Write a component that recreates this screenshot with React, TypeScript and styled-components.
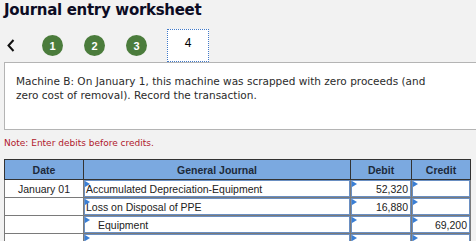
import styled, { createGlobalStyle } from 'styled-components'

const GlobalStyle = createGlobalStyle`
  html, body {
    margin: 0;
    padding: 0;
    background: #f2f2f2;
    overflow: hidden;
  }
  body {
    font-family: 'DejaVu Sans', Verdana, sans-serif;
  }
`

export const Page = styled.div`
  width: 476px;
  height: 241px;
  overflow: hidden;
  padding-left: 4px;
  box-sizing: border-box;
`

export const Title = styled.h1`
  margin: 0;
  height: 29px;
  padding-top: 1px;
  box-sizing: border-box;
  font-family: 'DejaVu Sans', Verdana, sans-serif;
  font-size: 15px;
  font-weight: bold;
  letter-spacing: -0.3px;
  color: #0c0c24;
`

export const Steps = styled.div`
  display: flex;
  align-items: center;
  height: 33px;
  position: relative;
  z-index: 1;
`

export const Back = styled.div`
  display: flex;
  align-items: center;
  margin-left: 3px;
  margin-right: 27px;
  width: 8px;
  height: 14px;
`

export const StepDot = styled.div`
  width: 21px;
  height: 21px;
  border-radius: 50%;
  background: #4b7c3c;
  color: #fff;
  font-family: 'Liberation Sans', Arial, sans-serif;
  font-size: 11px;
  font-weight: bold;
  display: flex;
  align-items: center;
  justify-content: center;
  margin-right: 21px;
`

export const StepTab = styled.div`
  width: 42px;
  height: 33px;
  box-sizing: border-box;
  margin-left: -1px;
  border: 1px dotted #3f78c8;
  background: #fff;
  font-family: 'Liberation Sans', Arial, sans-serif;
  font-size: 12px;
  color: #000;
  display: flex;
  justify-content: center;
  padding-top: 6px;
`

export const Panel = styled.div`
  width: 480px;
  height: 68px;
  box-sizing: border-box;
  border: 1px solid #b4b4b4;
  background: #fff;
  padding: 11px 0 0 11px;
  font-family: 'DejaVu Sans', Verdana, sans-serif;
  font-size: 10.5px;
  line-height: 14px;
  color: #2b2b2b;
`

export const Note = styled.div`
  margin-top: 8px;
  height: 21px;
  font-family: 'DejaVu Sans', Verdana, sans-serif;
  font-size: 9px;
  color: #b0182c;
`

export const Table = styled.table`
  border-collapse: collapse;
  table-layout: fixed;
  width: 466px;
  font-family: 'Liberation Sans', Arial, sans-serif;
  font-size: 10.5px;
  color: #222;
`

export const Th = styled.th`
  height: 19px;
  padding: 0;
  background: #7ba9e0;
  border: 1px solid #333;
  font-family: 'Liberation Sans', Arial, sans-serif;
  font-size: 10.5px;
  font-weight: bold;
  color: #1d2a3a;
`

export const DateCell = styled.td`
  height: 17px;
  padding: 0;
  border: 1px solid #7a7a7a;
  background: #fff;
  text-align: center;
`

export const EntryCell = styled.td`
  height: 17px;
  padding: 0;
  border: 1px solid #7a7a7a;
  background: #fff;
`

export const EntryBox = styled.div<{ align?: 'left' | 'right'; indent?: boolean }>`
  position: relative;
  height: 17px;
  box-sizing: border-box;
  border: 1px solid #6a8fc2;
  line-height: 16px;
  white-space: nowrap;
  overflow: hidden;
  text-align: ${(p) => (p.align === 'right' ? 'right' : 'left')};
  padding: ${(p) => (p.indent ? '0 2px 0 13px' : '0 2px 0 1px')};
`

export const Flag = styled.span`
  position: absolute;
  left: 0;
  top: 0;
  width: 0;
  height: 0;
  border-top: 3px solid transparent;
  border-bottom: 3px solid transparent;
  border-left: 5px solid #3a7fd5;
`

type Row = {
  date: string
  account: string
  debit: string
  credit: string
  indent?: boolean
}

const rows: Row[] = [
  { date: 'January 01', account: 'Accumulated Depreciation-Equipment', debit: '52,320', credit: '' },
  { date: '', account: 'Loss on Disposal of PPE', debit: '16,880', credit: '' },
  { date: '', account: 'Equipment', debit: '', credit: '69,200', indent: true },
  { date: '', account: '', debit: '', credit: '' },
]

const Entry = ({ text, align, indent }: { text: string; align?: 'left' | 'right'; indent?: boolean }) => (
  <EntryCell>
    <EntryBox align={align} indent={indent}>
      <Flag />
      {text}
    </EntryBox>
  </EntryCell>
)

export default function App() {
  return (
    <>
      <GlobalStyle />
      <Page>
        <Title>Journal entry worksheet</Title>
        <Steps>
          <Back>
            <svg width="8" height="13" viewBox="0 0 8 13">
              <polyline points="6.5,1 1.5,6.5 6.5,12" fill="none" stroke="#111" strokeWidth="2" />
            </svg>
          </Back>
          <StepDot>1</StepDot>
          <StepDot>2</StepDot>
          <StepDot>3</StepDot>
          <StepTab>4</StepTab>
        </Steps>
        <Panel>
          Machine B: On January 1, this machine was scrapped with zero proceeds (and
          <br />
          zero cost of removal). Record the transaction.
        </Panel>
        <Note>Note: Enter debits before credits.</Note>
        <Table>
          <colgroup>
            <col style={{ width: 79 }} />
            <col style={{ width: 267 }} />
            <col style={{ width: 61 }} />
            <col style={{ width: 59 }} />
          </colgroup>
          <thead>
            <tr>
              <Th>Date</Th>
              <Th>General Journal</Th>
              <Th>Debit</Th>
              <Th>Credit</Th>
            </tr>
          </thead>
          <tbody>
            {rows.map((r, i) => (
              <tr key={i}>
                <DateCell>{r.date}</DateCell>
                <Entry text={r.account} indent={r.indent} />
                <Entry text={r.debit} align="right" />
                <Entry text={r.credit} align="right" />
              </tr>
            ))}
          </tbody>
        </Table>
      </Page>
    </>
  )
}
